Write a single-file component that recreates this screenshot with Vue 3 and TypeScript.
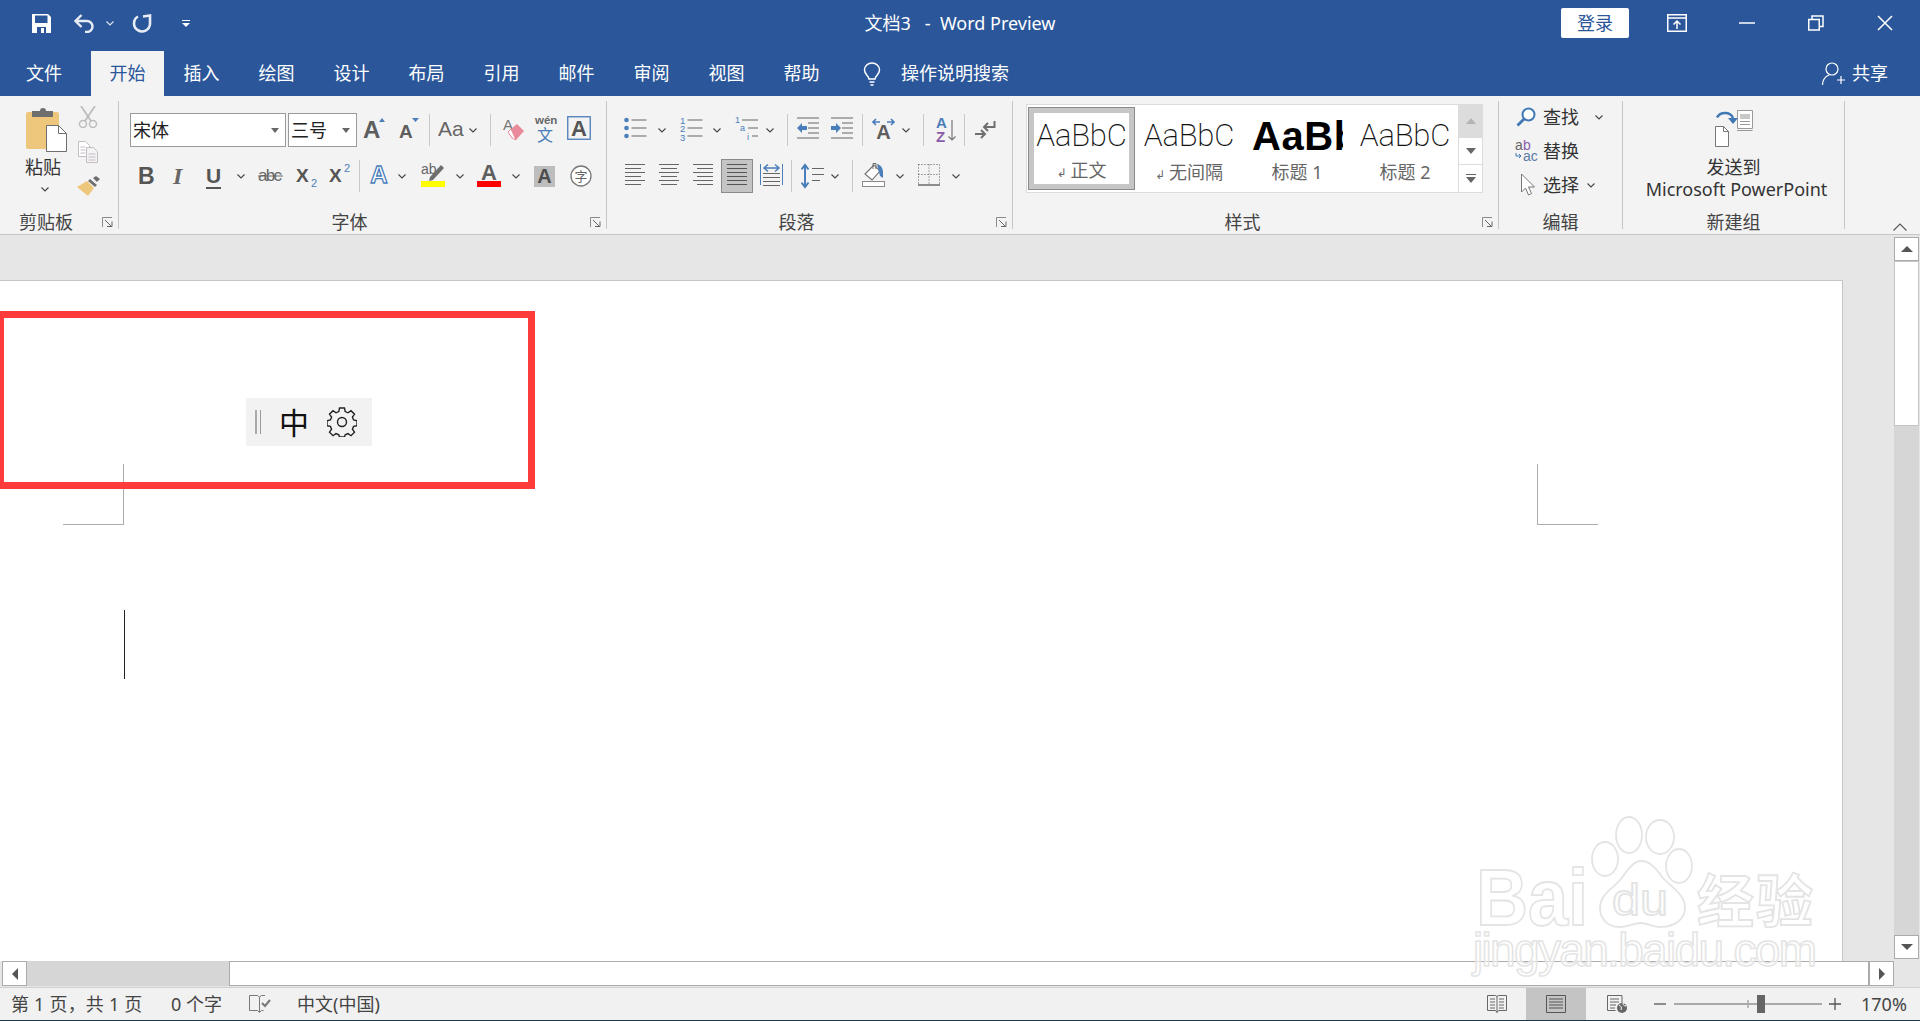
<script setup lang="ts">
const tabs = ['插入', '绘图', '设计', '布局', '引用', '邮件', '审阅', '视图', '帮助']

const docTitle = '文档3\u00a0\u00a0\u00a0-\u00a0\u00a0Word Preview'

const styles = [
  { sample: 'AaBbC', label: '正文', mark: true, kind: 'on' },
  { sample: 'AaBbC', label: '无间隔', mark: true, kind: '' },
  { sample: 'AaBbC', label: '标题 1', mark: false, kind: 'big' },
  { sample: 'AaBbC', label: '标题 2', mark: false, kind: '' },
]

const alignLeft = 'M0 5.5h20M0 9.5h16M0 13.5h20M0 17.5h16M0 21.5h20M0 25.5h16'
const alignCenter = 'M0 5.5h20M2 9.5h16M0 13.5h20M2 17.5h16M0 21.5h20M2 25.5h16'
const alignRight = 'M0 5.5h20M4 9.5h16M0 13.5h20M4 17.5h16M0 21.5h20M4 25.5h16'
const alignFull = 'M0 5.5h20M0 9.5h20M0 13.5h20M0 17.5h20M0 21.5h20M0 25.5h20'
</script>

<template>
  <div class="word">
    <svg class="defs" aria-hidden="true">
      <symbol id="chev" viewBox="0 0 8 5"><path d="M.5.5 4 4 7.5.5" fill="none" stroke="#444" stroke-width="1.1" /></symbol>
      <symbol id="launch" viewBox="0 0 11 11">
        <path d="M.5 10V.5H10" fill="none" stroke="#8a8a8a" /><path d="M3 3l6 6M5 9.5h5v-5" fill="none" stroke="#666" />
      </symbol>
    </svg>

    <header class="head">
      <div class="titlebar">
        <div class="qat">
          <svg class="q-save" width="19" height="19" viewBox="0 0 19 19">
            <path d="M0 0h16l3 3v16H0z" fill="#fff" />
            <path d="M3 1.5h12.5V9H3z" fill="#2b579a" />
            <path d="M5 13h9v6H5z" fill="#2b579a" /><path d="M9 14h3v5H9z" fill="#fff" />
          </svg>
          <svg class="q-undo" width="23" height="19" viewBox="0 0 23 19">
            <path d="M3 7h11a5.5 5.5 0 0 1 0 11h-2M8.5 1 2.500 7l6 6" fill="none" stroke="#e8edf5" stroke-width="2.400" />
          </svg>
          <svg class="chev q-chev" viewBox="0 0 8 5"><path d="M.5.5 4 4 7.5.5" fill="none" stroke="#dfe6f0" stroke-width="1.100" /></svg>
          <svg class="q-redo" width="20" height="20" viewBox="0 0 20 20">
            <path d="M6 3.500A8 8 0 1 0 18 11V2.500L11 3.500" fill="none" stroke="#e8edf5" stroke-width="2.600" />
          </svg>
          <svg class="q-more" width="8" height="7" viewBox="0 0 8 7"><path d="M0 .5h8" stroke="#fff" /><path d="M0 3h8L4 7z" fill="#fff" /></svg>
        </div>
        <div class="doc-title">{{ docTitle }}</div>
        <div class="winctl">
          <button class="login">登录</button>
          <svg class="w-ribbon" width="20" height="18" viewBox="0 0 20 18">
            <path d="M.75.75h18.500v16.500H.75zM.75 4h18.500" fill="none" stroke="#fff" stroke-width="1.500" />
            <path d="M10 15V8M6.500 10.500 10 7l3.500 3.500" fill="none" stroke="#fff" stroke-width="1.500" />
          </svg>
          <svg class="w-min" width="16" height="2" viewBox="0 0 16 2"><path d="M0 1h16" stroke="#fff" stroke-width="1.500" /></svg>
          <svg class="w-max" width="16" height="16" viewBox="0 0 16 16">
            <path d="M.75 4.500h10.500v10.500H.75zM4 4.500V1h11v10.500h-3.500" fill="none" stroke="#fff" stroke-width="1.500" />
          </svg>
          <svg class="w-close" width="16" height="16" viewBox="0 0 16 16"><path d="M1 1l14 14M15 1 1 15" stroke="#fff" stroke-width="1.500" /></svg>
        </div>
      </div>
      <nav class="tabs">
        <span class="tab first">文件</span>
        <span class="tab on">开始</span>
        <span v-for="t in tabs" :key="t" class="tab">{{ t }}</span>
        <svg class="bulb" width="18" height="24" viewBox="0 0 18 24">
          <path d="M6 17c0-3-4.500-4.500-4.500-9a7.500 7 0 0 1 15 0c0 4.500-4.500 6-4.500 9zM6.500 20h5M7.500 23h3" fill="none" stroke="#fff" stroke-width="1.500" />
        </svg>
        <span class="tell">操作说明搜索</span>
        <div class="share">
          <svg width="24" height="24" viewBox="0 0 24 24">
            <circle cx="10" cy="7" r="6" fill="none" stroke="#fff" stroke-width="1.200" />
            <path d="M.5 23c0-5 3-8.500 6.500-10M15 18h8M19 14v8" fill="none" stroke="#fff" stroke-width="1.200" />
          </svg>
          <span>共享</span>
        </div>
      </nav>
    </header>

    <section class="ribbon">
      <div class="grp g-clip">
        <div class="clip-body">
          <div class="paste">
            <svg width="41" height="45" viewBox="0 0 41 45">
              <rect y="5" width="33" height="37" rx="2" fill="#efc77c" />
              <path d="M6 10V4h8a3 3 0 0 1 6 0h7v6z" fill="#6e6e6e" />
              <path d="M20.500 18.500h12l8 8v18h-20z" fill="#fff" stroke="#6e6e6e" />
              <path d="M32.500 18.500v8h8" fill="none" stroke="#6e6e6e" />
            </svg>
            <span>粘贴</span>
            <svg class="chev"><use href="#chev" /></svg>
          </div>
          <div class="clip-small">
            <svg width="20" height="22" viewBox="0 0 20 22">
              <path d="M3 0l10 15M17 0 7 15" stroke="#bdbdbd" stroke-width="1.800" fill="none" />
              <circle cx="5" cy="18" r="3.500" fill="none" stroke="#bdbdbd" stroke-width="1.500" />
              <circle cx="15" cy="18" r="3.500" fill="none" stroke="#bdbdbd" stroke-width="1.500" />
            </svg>
            <svg width="20" height="22" viewBox="0 0 20 22">
              <path d="M.5.5h7l4 4v11H.5z" fill="#fff" stroke="#c4bcc4" />
              <path d="M8.500 6.500h7l4 4v11h-11z" fill="#f3f3f3" stroke="#c4bcc4" />
              <path d="M2.500 6h5M2.500 9h5M2.500 12h5M10.500 13h7M10.500 16h7M10.500 19h7" stroke="#c4bcc4" />
            </svg>
            <svg width="23" height="20" viewBox="0 0 23 20">
              <path d="M13 3l7 6-2 2-7-6z" fill="#6e6e6e" /><path d="M16 2l3-2 4 3-3 3z" fill="#6e6e6e" />
              <path d="M10 5l7 7-6 8L0 11z" fill="#efc77c" />
            </svg>
          </div>
        </div>
        <div class="foot"><span>剪贴板</span><i class="launch"><svg width="11" height="11"><use href="#launch" /></svg></i></div>
      </div>

      <div class="grp g-font">
        <div class="rows">
          <div class="row font-r1">
            <div class="combo w-font"><span>宋体</span><b></b></div>
            <div class="combo w-size"><span>三号</span><b></b></div>
            <svg class="ico" width="24" height="34" viewBox="0 0 24 34">
              <text x="1" y="25" font-size="24" font-weight="700" fill="#5e5e5e">A</text><path d="M17 9l3-4 3 4z" fill="#4a7eba" />
            </svg>
            <svg class="ico" width="23" height="34" viewBox="0 0 23 34">
              <text x="2" y="25" font-size="19" font-weight="700" fill="#5e5e5e">A</text><path d="M15 5h7l-3.500 4z" fill="#4a7eba" />
            </svg>
            <i class="sep"></i>
            <svg class="ico" width="26" height="34" viewBox="0 0 26 34"><text x="0" y="23" font-size="21" fill="#666">Aa</text></svg>
            <svg class="chev"><use href="#chev" /></svg>
            <i class="sep"></i>
            <svg class="ico" width="24" height="34" viewBox="0 0 24 34">
              <text x="2" y="17" font-size="15" fill="#777">A</text>
              <path d="M10 16l6-5 7 7-8 9z" fill="#e88a9b" /><path d="M10 16l-3 3 4 6 4 2z" fill="#fff" stroke="#e88a9b" />
            </svg>
            <svg class="ico" width="26" height="34" viewBox="0 0 26 34">
              <text x="2" y="11" font-size="11.500" font-weight="700" fill="#666">wén</text>
              <text x="4" y="28" font-size="16" fill="#4a7eba">文</text>
            </svg>
            <svg class="ico" width="24" height="34" viewBox="0 0 24 34">
              <rect x=".75" y="3.750" width="22.500" height="22.500" fill="none" stroke="#4a7eba" stroke-width="1.300" />
              <text x="12" y="23" font-size="22" font-weight="700" fill="#555" text-anchor="middle">A</text>
            </svg>
          </div>
          <div class="row font-r2">
            <span class="t-b">B</span>
            <span class="t-i">I</span>
            <span class="t-u">U</span>
            <svg class="chev"><use href="#chev" /></svg>
            <svg class="ico" width="25" height="34" viewBox="0 0 25 34">
              <text x="0" y="22" font-size="17" fill="#666" textLength="24">abc</text><path d="M0 17h25" stroke="#666" />
            </svg>
            <svg class="ico" width="22" height="34" viewBox="0 0 22 34">
              <text x="0" y="23" font-size="19" font-weight="700" fill="#555">X</text><text x="15" y="28" font-size="11" fill="#4a7eba">2</text>
            </svg>
            <svg class="ico" width="22" height="34" viewBox="0 0 22 34">
              <text x="0" y="23" font-size="19" font-weight="700" fill="#555">X</text><text x="15" y="13" font-size="11" fill="#4a7eba">2</text>
            </svg>
            <i class="sep"></i>
            <svg class="ico" width="20" height="34" viewBox="0 0 20 34">
              <text x="10" y="24" font-size="24" font-weight="700" fill="#fff" stroke="#4a7eba" stroke-width="1.300" text-anchor="middle">A</text>
            </svg>
            <svg class="chev"><use href="#chev" /></svg>
            <svg class="ico" width="24" height="34" viewBox="0 0 24 34">
              <text x="0" y="15" font-size="14" fill="#666">ab</text>
              <path d="M9 18 20 6l3 3-11 12-4 1z" fill="#6e6e6e" />
              <rect y="22" width="24" height="6" fill="#ff0" />
            </svg>
            <svg class="chev"><use href="#chev" /></svg>
            <svg class="ico" width="24" height="34" viewBox="0 0 24 34">
              <text x="12" y="21" font-size="22" font-weight="700" fill="#5e5e5e" text-anchor="middle">A</text>
              <rect y="22" width="24" height="6" fill="#f00" />
            </svg>
            <svg class="chev"><use href="#chev" /></svg>
            <div class="shaded">A</div>
            <svg class="ico" width="22" height="34" viewBox="0 0 22 34">
              <circle cx="11" cy="17" r="10" fill="#fff" stroke="#777" stroke-width="1.300" />
              <text x="11" y="22" font-size="13" fill="#666" text-anchor="middle">字</text>
            </svg>
          </div>
        </div>
        <div class="foot"><span>字体</span><i class="launch"><svg width="11" height="11"><use href="#launch" /></svg></i></div>
      </div>

      <div class="grp g-para">
        <div class="rows">
          <div class="row para-r1">
            <svg class="ico" width="23" height="34" viewBox="0 0 23 34">
              <circle cx="2.500" cy="7" r="2.300" fill="#4a7eba" /><circle cx="2.500" cy="15" r="2.300" fill="#4a7eba" /><circle cx="2.500" cy="23" r="2.300" fill="#4a7eba" />
              <path d="M7.500 7h15M7.500 15h15M7.500 23h15" stroke="#666" stroke-width="1.200" />
            </svg>
            <svg class="chev"><use href="#chev" /></svg>
            <svg class="ico" width="23" height="34" viewBox="0 0 23 34">
              <text y="11" font-size="9.500" fill="#4a7eba">1</text><text y="19" font-size="9.500" fill="#4a7eba">2</text><text y="27.500" font-size="9.500" fill="#4a7eba">3</text>
              <path d="M7.500 7h15M7.500 15h15M7.500 23h15" stroke="#666" stroke-width="1.200" />
            </svg>
            <svg class="chev"><use href="#chev" /></svg>
            <svg class="ico" width="24" height="34" viewBox="0 0 24 34">
              <text y="10" font-size="9" fill="#4a7eba">1</text><text x="5" y="18" font-size="9" fill="#4a7eba">a</text><text x="12" y="27" font-size="9" fill="#4a7eba">i</text>
              <path d="M7 7h16M13 15h10M17 23h6" stroke="#666" stroke-width="1.200" />
            </svg>
            <svg class="chev"><use href="#chev" /></svg>
            <i class="sep"></i>
            <svg class="ico" width="22" height="34" viewBox="0 0 22 34">
              <path d="M0 5h22M11 10h11M11 15h11M11 20h11M0 25h22" stroke="#666" stroke-width="1.200" />
              <path d="M0 15l5-5v3h5v4H5v3z" fill="#4a7eba" />
            </svg>
            <svg class="ico" width="22" height="34" viewBox="0 0 22 34">
              <path d="M0 5h22M11 10h11M11 15h11M11 20h11M0 25h22" stroke="#666" stroke-width="1.200" />
              <path d="M10 15l-5-5v3H0v4h5v3z" fill="#4a7eba" />
            </svg>
            <i class="sep"></i>
            <svg class="ico" width="24" height="34" viewBox="0 0 24 34">
              <path d="M1 9h7M4 6 1 9l3 3M15 9h7M19 6l3 3-3 3" fill="none" stroke="#4a7eba" stroke-width="1.600" />
              <text x="11.500" y="26" font-size="20" font-weight="700" fill="#5e5e5e" text-anchor="middle">A</text>
            </svg>
            <svg class="chev"><use href="#chev" /></svg>
            <i class="sep"></i>
            <svg class="ico" width="22" height="34" viewBox="0 0 22 34">
              <text x="1" y="15" font-size="15" font-weight="700" fill="#4a7eba">A</text>
              <text x="1" y="29" font-size="15" font-weight="700" fill="#8a5ca8">Z</text>
              <path d="M17 7v20M13.500 23.500 17 27l3.500-3.500" fill="none" stroke="#777" stroke-width="1.200" />
            </svg>
            <i class="sep"></i>
            <svg class="ico" width="21" height="34" viewBox="0 0 21 34">
              <path d="M19.500 8v6H9M13 10l-4 4 4 4" fill="none" stroke="#6e6e6e" stroke-width="2" />
              <path d="M0 21h9M6 17l4 4-4 4" fill="none" stroke="#6e6e6e" stroke-width="2" />
            </svg>
          </div>
          <div class="row para-r2">
            <svg class="ico" width="20" height="34" viewBox="0 0 20 34"><path :d="alignLeft" stroke="#666" /></svg>
            <svg class="ico" width="20" height="34" viewBox="0 0 20 34"><path :d="alignCenter" stroke="#666" /></svg>
            <svg class="ico" width="20" height="34" viewBox="0 0 20 34"><path :d="alignRight" stroke="#666" /></svg>
            <div class="justify"><svg class="ico" width="20" height="32" viewBox="0 1 20 32"><path :d="alignFull" stroke="#555" /></svg></div>
            <svg class="ico" width="23" height="34" viewBox="0 0 23 34">
              <path d="M.5 5v21M22.500 5v21" stroke="#4a7eba" />
              <path d="M4 9h15M8 5.500 4 9l4 3.500M15 5.500 19 9l-4 3.500" fill="none" stroke="#4a7eba" stroke-width="1.500" />
              <path d="M3 14.500h17M3 18.500h17M3 22.500h17M3 26.500h17" stroke="#666" />
            </svg>
            <i class="sep"></i>
            <svg class="ico" width="23" height="34" viewBox="0 0 23 34">
              <path d="M4 7v20M.5 10.500 4 6l3.500 4.500M.5 23.500 4 28l3.500-4.500" fill="none" stroke="#4a7eba" stroke-width="2" />
              <path d="M11 9.500h12M11 15.500h12M11 21.500h8" stroke="#666" stroke-width="1.200" />
            </svg>
            <svg class="chev"><use href="#chev" /></svg>
            <i class="sep"></i>
            <svg class="ico" width="23" height="34" viewBox="0 0 23 34">
              <path d="M12 6 3 15l7 6 8-9z" fill="#fff" stroke="#6e6e6e" stroke-width="1.100" />
              <path d="M11 10V4.500h3V10" fill="none" stroke="#6e6e6e" />
              <path d="M15 5c4 1 6 4 6 9v5l-3-2z" fill="#4a7eba" />
              <rect x=".5" y="22.500" width="22" height="5" fill="#fff" stroke="#8a8a8a" />
            </svg>
            <svg class="chev"><use href="#chev" /></svg>
            <svg class="ico" width="22" height="34" viewBox="0 0 22 34">
              <path d="M.5 5.500h21M.5 5.500v20M21.500 5.500v20M11 5.500v20M.5 15.500h21" fill="none" stroke="#555" stroke-dasharray="1 2" />
              <path d="M0 26h22" stroke="#555" stroke-width="1.300" />
            </svg>
            <svg class="chev"><use href="#chev" /></svg>
          </div>
        </div>
        <div class="foot"><span>段落</span><i class="launch"><svg width="11" height="11"><use href="#launch" /></svg></i></div>
      </div>

      <div class="grp g-style">
        <div class="gallery">
          <div class="items">
            <div v-for="s in styles" :key="s.label" class="sty" :class="s.kind">
              <div class="sample">{{ s.sample }}</div>
              <div class="cap"><i v-if="s.mark">↲</i>{{ s.label }}</div>
            </div>
          </div>
          <div class="gal-btns">
            <div class="up"><b></b></div>
            <div class="dn"><b></b></div>
            <div class="more"><em></em><b></b></div>
          </div>
        </div>
        <div class="foot"><span>样式</span><i class="launch"><svg width="11" height="11"><use href="#launch" /></svg></i></div>
      </div>

      <div class="grp g-edit">
        <div class="edit-rows">
          <div class="erow">
            <svg width="20" height="20" viewBox="0 0 20 20">
              <circle cx="12.500" cy="7.500" r="6" fill="#fff" stroke="#3f78b5" stroke-width="2" /><path d="M8 12 1.500 18.500" stroke="#3f78b5" stroke-width="2.800" />
            </svg>
            <span>查找</span>
            <svg class="chev e-c1"><use href="#chev" /></svg>
          </div>
          <div class="erow">
            <svg class="ico ab" width="24" height="22" viewBox="0 0 24 22">
              <text x="0" y="10" font-size="14" fill="#666">a</text><text x="8" y="10" font-size="14" fill="#8a5ca8">b</text>
              <text x="8" y="21" font-size="14" fill="#5a7ea5">ac</text>
              <path d="M1 13v3h5M4 14l2 2-2 2" fill="none" stroke="#3f78b5" />
            </svg>
            <span>替换</span>
          </div>
          <div class="erow">
            <svg width="20" height="24" viewBox="0 0 20 24">
              <path d="M5.500 1v18l4-4 3 7 3-1.500-3-6.500h6z" fill="#fff" stroke="#777" />
            </svg>
            <span>选择</span>
            <svg class="chev e-c2"><use href="#chev" /></svg>
          </div>
        </div>
        <div class="foot plain"><span>编辑</span></div>
      </div>

      <div class="grp g-new">
        <div class="new-btn">
          <svg width="38" height="37" viewBox="0 0 38 37">
            <path d="M22.500.5h15v18h-15z" fill="#fff" stroke="#9a9a9a" />
            <path d="M25 4h10v5H25z" fill="#c8c8c8" /><path d="M25 11.500h10M25 14.500h10" stroke="#9a9a9a" /><path d="M22 20.500h15.500" stroke="#9a9a9a" />
            <path d="M2 7.500C5 2 15 1 18 8" fill="none" stroke="#3f78b5" stroke-width="2.500" />
            <path d="M13 8h10l-5 6z" fill="#3f78b5" />
            <path d="M.5 16.500h8l5 5v15H.5z" fill="#fff" stroke="#777" /><path d="M8.500 16.500v5h5" fill="none" stroke="#777" />
          </svg>
          <span class="n1">发送到</span>
          <span class="n2">Microsoft PowerPoint</span>
        </div>
        <div class="foot plain"><span>新建组</span></div>
      </div>

      <svg class="collapse" width="14" height="8" viewBox="0 0 14 8"><path d="M.5 7.500 7 1l6.500 6.500" fill="none" stroke="#555" stroke-width="1.100" /></svg>
    </section>

    <section class="workspace">
      <div class="canvas">
        <div class="page">
          <div class="marks">
            <i class="mark m-l"></i>
            <i class="mark m-r"></i>
          </div>
          <i class="caret"></i>
          <div class="callout"></div>
          <div class="ime">
            <i class="grip"></i>
            <span>中</span>
            <svg width="30" height="30" viewBox="0 0 30 30">
              <path d="M12.500 1h5l.7 3.600 2.800 1.200 3-2.100 3.500 3.500-2.100 3 1.200 2.800 3.400.7v5l-3.400.7-1.200 2.800 2.100 3-3.500 3.500-3-2.100-2.800 1.200-.7 2.200h-5l-.7-2.200-2.800-1.200-3 2.100-3.500-3.500 2.100-3-1.200-2.800-3.400-.7v-5l3.400-.7 1.200-2.800-2.100-3 3.500-3.500 3 2.100 2.800-1.200z" fill="none" stroke="#222" stroke-width="1.400" />
              <circle cx="15" cy="15" r="4.500" fill="none" stroke="#222" stroke-width="1.400" />
            </svg>
          </div>
        </div>
      </div>
      <div class="vscroll">
        <div class="s-btn"><b class="tri-up"></b></div>
        <div class="v-thumb"></div>
        <div class="v-track"></div>
        <div class="s-btn"><b class="tri-dn"></b></div>
      </div>
    </section>

    <div class="hscroll">
      <div class="s-btn h"><b class="tri-l"></b></div>
      <div class="h-track"></div>
      <div class="h-thumb"></div>
      <div class="s-btn h"><b class="tri-r"></b></div>
    </div>

    <footer class="status">
      <span class="st1">第 1 页，共 1 页</span>
      <span class="st2">0 个字</span>
      <svg class="st3" width="22" height="20" viewBox="0 0 22 20">
        <path d="M.5 1.500h8l2 1.500 2-1.500H16M.5 1.500v15h8l2 2 2-2h2M10.500 3v15" fill="none" stroke="#777" />
        <path d="M13 9l3 3 5-6" fill="none" stroke="#777" stroke-width="2" />
      </svg>
      <span>中文(中国)</span>
      <div class="st-right">
        <svg width="20" height="18" viewBox="0 0 20 18">
          <path d="M.5.5h8l1.500 1 1.500-1h8v15h-8l-1.500 2-1.500-2h-8zM10 1.500v16M3 4h5M3 7h5M3 10h5M3 13h5M12 4h5M12 7h5M12 10h5M12 13h5" fill="none" stroke="#666" />
        </svg>
        <div class="view-on">
          <svg width="20" height="18" viewBox="0 0 20 18"><path d="M.5.5h19v17H.5zM3 4h14M3 7h14M3 10h14M3 13h14" fill="none" stroke="#555" /></svg>
        </div>
        <svg width="20" height="18" viewBox="0 0 20 18">
          <path d="M.5.5h14.500v8M.5.5v15h8M3 4h9M3 7h9M3 10h6M3 13h5" fill="none" stroke="#666" />
          <circle cx="15" cy="13" r="5" fill="#666" /><path d="M12 10c2 1 3 2 2 5M16 8c0 2 1 3 3 3" stroke="#fff" fill="none" />
        </svg>
        <svg width="12" height="2" viewBox="0 0 12 2"><path d="M0 1h12" stroke="#555" stroke-width="1.300" /></svg>
        <svg width="148" height="18" viewBox="0 0 148 18">
          <path d="M0 9h148" stroke="#aaa" stroke-width="2" /><path d="M74 5v8" stroke="#aaa" stroke-width="1.500" />
          <rect x="83" width="8" height="18" fill="#666" />
        </svg>
        <svg width="12" height="12" viewBox="0 0 12 12"><path d="M0 6h12M6 0v12" stroke="#555" stroke-width="1.300" /></svg>
        <span>170%</span>
      </div>
    </footer>

    <svg class="mark-wm" width="360" height="175" viewBox="1465 815 360 175">
      <g fill="#fff" stroke="#e4e4e4" stroke-width="1.800">
        <ellipse cx="1605" cy="859" rx="13" ry="17" /><ellipse cx="1629" cy="835" rx="13" ry="18" />
        <ellipse cx="1660" cy="837" rx="14" ry="17" /><ellipse cx="1679" cy="866" rx="13" ry="17" />
        <path d="M1641 861c10 0 16 9 22 17 8 9 22 16 22 30 0 12-12 19-24 19-8 0-14-4-20-4-7 0-13 4-22 4-12 0-19-9-19-19 0-14 13-19 21-29 6-8 12-18 20-18z" />
        <text x="1476" y="925" font-size="80" font-weight="700" textLength="112" lengthAdjust="spacingAndGlyphs">Bai</text>
        <text x="1612" y="915" font-size="44" textLength="56" lengthAdjust="spacingAndGlyphs">du</text>
        <text x="1697" y="922" font-size="57" font-weight="700" textLength="116">经验</text>
      </g>
      <text x="1473" y="966" font-size="46" fill="rgba(255,255,255,.55)" stroke="#e4e4e4" stroke-width="1.500" textLength="344">jingyan.baidu.com</text>
    </svg>
  </div>
</template>

<style>
html, body { margin: 0; }
</style>

<style scoped>
.word {
  position: relative;
  width: 1920px;
  height: 1021px;
  overflow: hidden;
  display: flex;
  flex-direction: column;
  background: #e6e6e6;
  font-family: "Noto Sans", "Noto Sans CJK SC", sans-serif;
  font-size: 18px;
  color: #444;
}
.defs { position: absolute; width: 0; height: 0; }
svg { display: block; flex: none; }
i, em { font-style: normal; }
.chev { width: 8px; height: 5px; }

/* 标题栏 */
.head { height: 96px; background: #2b579a; color: #fff; flex: none; }
.titlebar { height: 46px; display: grid; grid-template-columns: 1fr auto 1fr; align-items: center; }
.qat { display: flex; align-items: center; padding-left: 32px; }
.q-undo { margin-left: 22px; }
.q-chev { margin-left: 10px; }
.q-redo { margin-left: 18px; }
.q-more { margin-left: 30px; }
.doc-title { line-height: 24px; }
.winctl { display: flex; align-items: center; justify-content: flex-end; padding-right: 27px; }
.login {
  width: 68px; height: 30px; border: 0; border-radius: 2px; background: #fff; color: #2b579a;
  font: inherit; padding: 0; line-height: 30px;
}
.w-ribbon { margin-left: 38px; }
.w-min { margin-left: 52px; }
.w-max { margin-left: 53px; }
.w-close { margin-left: 53px; }

.tabs { height: 50px; padding-top: 5px; box-sizing: border-box; display: flex; align-items: center; }
.tab { width: 75px; height: 45px; line-height: 44px; text-align: center; flex: none; }
.tab.first { width: 91px; padding-right: 3px; box-sizing: border-box; }
.tab.on { width: 73px; background: #f3f3f3; color: #2b579a; }
.bulb { margin-left: 24px; }
.tell { margin-left: 20px; height: 45px; line-height: 44px; }
.share { margin-left: auto; padding-right: 32px; display: flex; align-items: center; gap: 6px; line-height: 44px; }
.share span { height: 45px; }

/* 功能区 */
.ribbon {
  height: 139px; box-sizing: border-box; flex: none; display: flex; background: #f3f3f3;
  padding-top: 5px; border-bottom: 1px solid #c6c6c6; position: relative;
}
.grp {
  height: 128px; box-sizing: border-box; border-right: 1px solid #c6c6c6; flex: none;
  display: flex; flex-direction: column; justify-content: flex-end;
}
.foot { display: flex; align-items: center; height: 24px; line-height: 24px; margin-bottom: -5px; color: #444; }
.foot span { flex: 1; text-align: center; }
.launch { width: 26px; flex: none; display: flex; justify-content: center; padding-left: 4px; box-sizing: border-box; }
.g-clip { width: 119px; }
.g-font { width: 488px; }
.g-para { width: 406px; }
.g-style { width: 486px; }
.g-edit { width: 124px; }
.g-new { width: 222px; }

.clip-body { display: flex; flex: 1; }
.paste { width: 78px; padding: 6px 0 0 26px; box-sizing: border-box; display: flex; flex-direction: column; }
.paste span { width: 36px; margin: 3px 0 0 -1px; line-height: 24px; color: #333; }
.paste .chev { margin: 8px 0 0 15px; }
.clip-small { display: flex; flex-direction: column; padding-top: 5px; }
.clip-small svg:nth-child(2) { margin-top: 13px; }
.clip-small svg:nth-child(3) { margin-top: 13px; margin-left: -1px; }

.rows { flex: 1; padding-top: 12px; display: flex; flex-direction: column; gap: 12px; }
.row { display: grid; height: 34px; align-items: center; justify-items: start; }
.font-r1 { margin-left: 11px; grid-template-columns: 158px 74px 35px 32px 9px 31px 21px 11px 32px 34px auto; }
.font-r2 { margin-left: 19px; grid-template-columns: 35px 33px 31px 21px 38px 33px 30px 10px 29px 23px 35px 21px 35px 22px 36px auto; }
.para-r1 { margin-left: 17px; grid-template-columns: 34px 22px 33px 22px 31px 21px 10px 34px 31px 10px 30px 21px 12px 29px 11px auto; }
.para-r2 { margin-left: 18px; grid-template-columns: 34px 34px 28px 39px 31px 10px 30px 21px 10px 34px 22px 34px auto; }
.ico { font-family: "Liberation Sans", "Noto Sans CJK SC", sans-serif; }
.sep { width: 1px; height: 32px; background: #c8c8c8; }

.combo {
  height: 34px; box-sizing: border-box; border: 1px solid #9a9a9a; background: #fff;
  display: flex; align-items: center; padding-left: 2px; color: #222; line-height: 32px;
}
.combo b { margin-left: auto; margin-right: 6px; border: 4px solid transparent; border-top: 5px solid #666; border-bottom: 0; }
.w-font { width: 156px; }
.w-size { width: 69px; }

.t-b { font: 700 23px/34px "Liberation Sans", sans-serif; color: #555; }
.t-i { font: italic 700 24px/34px "Liberation Serif", serif; color: #666; }
.t-u { font: 700 21px/26px "Liberation Sans", sans-serif; color: #555; border-bottom: 2px solid #555; height: 24px; }
.shaded {
  width: 21px; height: 21px; background: #bdbdbd; color: #4c4c4c; text-align: center;
  font: 700 20px/21px "Liberation Sans", sans-serif;
}
.justify { width: 32px; height: 34px; box-sizing: border-box; border: 1px solid #8a8a8a; background: #c4c4c4; display: flex; justify-content: center; }

.gallery {
  flex: 1; width: 457px; margin: 3px 0 0 13px; box-sizing: border-box; height: 89px; flex-grow: 0;
  display: flex; background: #fff; border: 1px solid #dcdcdc; margin-bottom: 17px;
}
.items { display: flex; flex: 1; min-width: 0; }
.sty { width: 108px; flex: none; box-sizing: border-box; padding: 10px 4px 0; text-align: center; overflow: hidden; }
.sty.on { border: 6px solid #c6c6c6; outline: 1px solid #8a8a8a; outline-offset: -1px; padding: 4px 0 0; margin: 2px 0 2px 1px; height: 83px; width: 107px; }
.sample { font: 200 31px/42px Roboto, "Noto Sans", sans-serif; color: #111; white-space: nowrap; letter-spacing: -.2px; }
.sty.on .sample { line-height: 38px; }
.big { padding-left: 9px; }
.big .sample { font: 700 40px/42px "Liberation Sans", sans-serif; color: #000; text-align: left; width: 91px; overflow: hidden; letter-spacing: .6px; }
.big .cap { margin-left: -5px; }
.cap { color: #666; line-height: 24px; margin-top: 3px; }
.sty.on .cap { margin-top: 3px; }
.cap i { font: 12px "DejaVu Sans", sans-serif; margin-right: 4px; }
.gal-btns { width: 23px; flex: none; display: flex; flex-direction: column; border-left: 1px solid #dcdcdc; }
.gal-btns > div { display: flex; flex-direction: column; align-items: center; justify-content: center; box-sizing: border-box; }
.gal-btns .up { height: 33px; background: #dcdcdc; }
.gal-btns .up b { border: 5px solid transparent; border-bottom: 6px solid #b5b5b5; border-top: 0; }
.gal-btns .dn { height: 28px; border-bottom: 1px solid #dcdcdc; }
.gal-btns .dn b { border: 5px solid transparent; border-top: 6px solid #666; border-bottom: 0; }
.gal-btns .more { height: 27px; gap: 2px; }
.gal-btns .more em { width: 10px; height: 1px; background: #666; }
.gal-btns .more b { border: 5px solid transparent; border-top: 6px solid #666; border-bottom: 0; }

.edit-rows { flex: 1; margin-top: -1px; }
.erow { height: 34px; display: flex; align-items: center; position: relative; padding-left: 17px; color: #333; line-height: 24px; }
.erow span { position: absolute; left: 44px; }
.erow .ab { margin-left: -1px; }
.e-c1 { margin-left: 59px; }
.e-c2 { margin-left: 51px; }
.foot.plain { margin-bottom: -5px; }

.new-btn { flex: 1; display: flex; flex-direction: column; align-items: center; padding-top: 9px; line-height: 22px; color: #333; }
.new-btn svg { margin-left: 1px; }
.n1 { margin-top: 9px; }
.n2 { margin-left: 6px; }

.collapse { margin: 122px 0 0 48px; }

/* 文档区 */
.workspace { flex: 1; min-height: 0; display: flex; }
.canvas { width: 1894px; flex: none; padding-top: 45px; box-sizing: border-box; overflow: hidden; }
.page {
  width: 1843px; height: 100%; box-sizing: border-box; background: #fff; position: relative;
  border-top: 1px solid #c6c6c6; border-right: 1px solid #c6c6c6;
}
.marks { display: flex; justify-content: space-between; padding: 183px 244px 0 63px; }
.mark { width: 60px; height: 60px; display: block; border-bottom: 1px solid #ababab; }
.m-l { border-right: 1px solid #ababab; }
.m-r { border-left: 1px solid #ababab; }
.caret { display: block; width: 1px; height: 69px; margin: 85px 0 0 123.5px; background: #222; }
.callout {
  position: absolute; left: 0; top: 30px; width: 535px; height: 178px; box-sizing: border-box;
  border: solid #ff3b3b; border-width: 7px 7px 7px 4px;
}
.ime {
  position: absolute; left: 246px; top: 117px; width: 126px; height: 48px; background: #f2f2f2;
  display: flex; align-items: center; color: #111;
}
.grip { width: 3px; height: 24px; margin-left: 9px; border-left: 2px solid #aaa; border-right: 1px solid #999; }
.ime span { font-size: 30px; line-height: 36px; margin: 1px 0 0 18px; }
.ime svg { margin-left: 18px; }

.vscroll { flex: 1; display: flex; flex-direction: column; padding-top: 2px; padding-right: 1px; }
.s-btn {
  width: 25px; height: 24px; box-sizing: border-box; background: #fff; border: 1px solid #ababab;
  display: flex; align-items: center; justify-content: center; flex: none;
}
.v-thumb { height: 165px; background: #fff; border: 1px solid #c6c6c6; box-sizing: border-box; flex: none; }
.v-track { flex: 1; background: #d6d6d6; }
.vscroll .s-btn:last-child { margin-bottom: 2px; }
.tri-up { border: 6px solid transparent; border-bottom: 6px solid #555; border-top: 0; }
.tri-dn { border: 6px solid transparent; border-top: 6px solid #555; border-bottom: 0; }
.tri-l { border: 6px solid transparent; border-right: 6px solid #555; border-left: 0; }
.tri-r { border: 6px solid transparent; border-left: 6px solid #555; border-right: 0; }

.hscroll { height: 26px; flex: none; display: flex; padding-left: 2px; box-sizing: border-box; }
.s-btn.h { height: 25px; }
.h-track { width: 202px; height: 25px; background: #d6d6d6; flex: none; }
.h-thumb { width: 1640px; height: 25px; box-sizing: border-box; background: #fff; border: 1px solid #ababab; flex: none; }

.status {
  height: 34px; box-sizing: border-box; flex: none; background: #f1f1f1; display: flex; align-items: center;
  padding-left: 11px; border-bottom: 1px solid #1e3a4a; color: #444; border-top: 1px solid #d0d0d0;
}
.status > span { position: relative; top: -1px; }
.st1 { width: 160px; flex: none; letter-spacing: .2px; }
.st2 { width: 78px; flex: none; }
.st3 { width: 48px; padding-right: 26px; box-sizing: border-box; flex: none; }
.st-right {
  margin-left: auto; height: 100%; padding-right: 12px; display: grid; align-items: center; justify-items: start;
  grid-template-columns: 39px 81px 47px 20px 155px 32px 47px;
}
.view-on { width: 60px; height: 32px; background: #c4c4c4; display: flex; align-items: center; justify-content: center; }

.mark-wm {
  position: absolute; left: 1465px; top: 815px; pointer-events: none;
  font-family: "Liberation Sans", "Noto Sans CJK SC", sans-serif;
}
</style>
